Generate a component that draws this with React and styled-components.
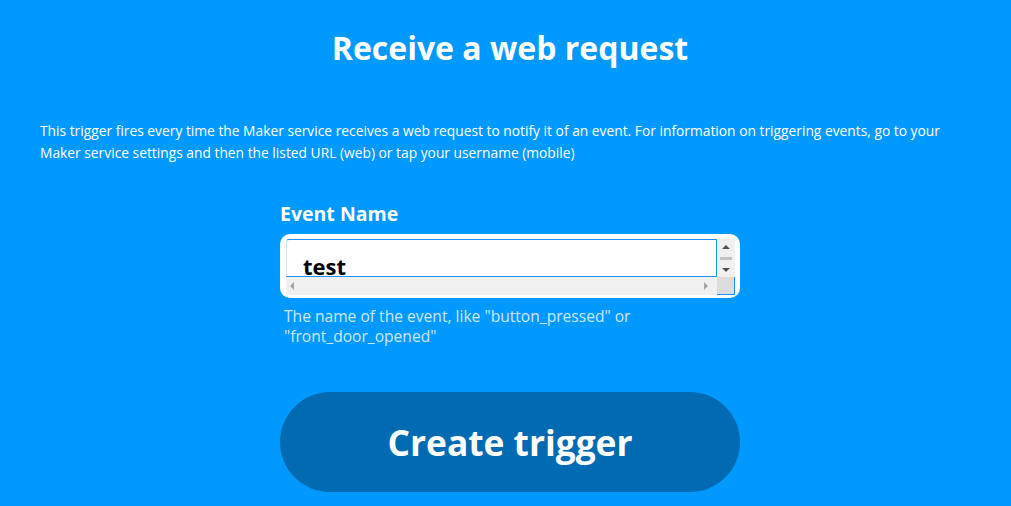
import React from "react";
import styled, { createGlobalStyle } from "styled-components";

const Global = createGlobalStyle`
  html, body { margin: 0; padding: 0; background: #0099ff; overflow: hidden; }
  body { font-family: "Open Sans", "Lato", sans-serif; color: #fff; }
`;

const Page = styled.main`
  width: 1020px;
  min-height: 506px;
  background: #0099ff;
  display: flex;
  flex-direction: column;
  align-items: center;
  padding-top: 30px;
  box-sizing: border-box;
`;

const Title = styled.h1`
  margin: 0;
  font-size: 32px;
  line-height: 36px;
  font-weight: 700;
  color: #fff;
`;

const Description = styled.p`
  align-self: stretch;
  margin: 54px 0 0;
  padding: 0 40px;
  font-size: 13.8px;
  line-height: 22px;
  font-weight: 400;
  color: #fff;
`;

const Form = styled.section`
  width: 460px;
  margin-top: 40px;
  display: flex;
  flex-direction: column;
`;

const Label = styled.label`
  font-size: 19.5px;
  line-height: 20px;
  font-weight: 700;
  color: #fff;
`;

const TextBox = styled.div`
  margin-top: 10px;
  height: 64px;
  box-sizing: border-box;
  background: #fff;
  border-radius: 10px;
  padding: 5px 5px 3px 6px;
`;

const Field = styled.div`
  height: 100%;
  display: grid;
  grid-template-columns: 1fr 18px;
  grid-template-rows: 38px 18px;
`;

const Content = styled.div`
  border: 1px solid #1e90ff;
  border-left-color: #cfe6fb;
  border-top-left-radius: 3px;
  padding: 16px 0 0 16px;
  font-size: 22px;
  line-height: 20px;
  font-weight: 700;
  color: #000;
`;

const VScroll = styled.div`
  background: #f0f0f0;
  display: flex;
  flex-direction: column;
  align-items: center;
  justify-content: space-between;
  padding: 6px 0 5px;
`;

const HScroll = styled.div`
  background: #f0f0f0;
  display: flex;
  align-items: center;
  justify-content: space-between;
  padding: 0 9px 0 4px;
`;

const Corner = styled.div`
  background: #dcdcdc;
  border-right: 1px solid #1e90ff;
  border-bottom: 1px solid #1e90ff;
  box-sizing: border-box;
`;

const Thumb = styled.div`
  width: 12px;
  height: 3px;
  background: #c1c1c1;
`;

const Arrow = ({ dir, color = "#505050" }) => {
  const pts = {
    up: "0,4 4,0 8,4",
    down: "0,0 8,0 4,4",
    left: "4,0 4,8 0,4",
    right: "0,0 0,8 4,4",
  }[dir];
  const vertical = dir === "up" || dir === "down";
  return (
    <svg width={vertical ? 8 : 4} height={vertical ? 4 : 8} viewBox={vertical ? "0 0 8 4" : "0 0 4 8"}>
      <polygon points={pts} fill={color} />
    </svg>
  );
};

const Help = styled.p`
  margin: 8px 0 0;
  padding-left: 4px;
  font-size: 15.6px;
  line-height: 20px;
  color: rgba(255, 255, 255, 0.8);
`;

const Button = styled.button`
  margin-top: 46px;
  height: 100px;
  width: 460px;
  border: none;
  border-radius: 50px;
  background: #006bb2;
  color: #fff;
  font-family: "Open Sans", "Lato", sans-serif;
  font-size: 35.3px;
  font-weight: 700;
  cursor: pointer;
`;

export default function App() {
  return (
    <>
      <Global />
      <Page>
        <Title>Receive a web request</Title>
        <Description>
          This trigger fires every time the Maker service receives a web request to notify it of an
          event. For information on triggering events, go to your Maker service settings and then the
          listed URL (web) or tap your username (mobile)
        </Description>
        <Form>
          <Label>Event Name</Label>
          <TextBox>
            <Field>
              <Content>test</Content>
              <VScroll>
                <Arrow dir="up" />
                <Thumb />
                <Arrow dir="down" />
              </VScroll>
              <HScroll>
                <Arrow dir="left" color="#a3a3a3" />
                <Arrow dir="right" color="#a3a3a3" />
              </HScroll>
              <Corner />
            </Field>
          </TextBox>
          <Help>The name of the event, like "button_pressed" or "front_door_opened"</Help>
          <Button>Create trigger</Button>
        </Form>
      </Page>
    </>
  );
}
